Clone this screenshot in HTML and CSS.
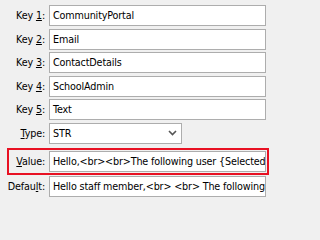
FILE: index.html
```html
<!DOCTYPE html>
<html>
<head>
<meta charset="utf-8">
<link rel="stylesheet" href="styles.css">
</head>
<body>
<div class="form">
  <div class="row">
    <div class="label">Key <u>1</u>:</div>
    <div class="field">CommunityPortal</div>
  </div>
  <div class="row">
    <div class="label">Key <u>2</u>:</div>
    <div class="field">Email</div>
  </div>
  <div class="row">
    <div class="label">Key <u>3</u>:</div>
    <div class="field">ContactDetails</div>
  </div>
  <div class="row">
    <div class="label">Key <u>4</u>:</div>
    <div class="field">SchoolAdmin</div>
  </div>
  <div class="row">
    <div class="label">Key <u>5</u>:</div>
    <div class="field">Text</div>
  </div>
  <div class="row">
    <div class="label"><u>T</u>ype:</div>
    <div class="field select">
      <span>STR</span>
      <svg class="chev" width="9" height="6" viewBox="0 0 9 6"><path d="M1 1 L4.5 4.5 L8 1" fill="none" stroke="#555" stroke-width="1.6"/></svg>
    </div>
  </div>
  <div class="row highlight">
    <div class="label"><u>V</u>alue:</div>
    <div class="field">Hello,&lt;br&gt;&lt;br&gt;The following user {Selected</div>
  </div>
  <div class="row last">
    <div class="label">Defau<u>l</u>t:</div>
    <div class="field">Hello staff member,&lt;br&gt; &lt;br&gt; The following</div>
  </div>
</div>
</body>
</html>
```

FILE: styles.css
```css
html, body {
  margin: 0;
  padding: 0;
  background: #f0f0f0;
}
body {
  font-family: "DejaVu Sans Condensed", "Liberation Sans", sans-serif;
  font-size: 10.7px;
  letter-spacing: -0.15px;
  color: #000;
  width: 271px;
  height: 202px;
  overflow: hidden;
}
.form {
  display: flex;
  flex-direction: column;
  gap: 2.5px;
  padding-top: 5px;
}
.row {
  display: flex;
  align-items: center;
  height: 21px;
  margin-right: 5px;
}
.label {
  width: 49px;
  flex: none;
  box-sizing: border-box;
  padding-right: 4px;
  text-align: right;
  white-space: nowrap;
}
.field {
  flex: 1;
  min-width: 0;
  height: 21px;
  box-sizing: border-box;
  border: 1px solid #adadad;
  background: #fff;
  padding-left: 3px;
  line-height: 19px;
  white-space: nowrap;
  overflow: hidden;
}
.select {
  flex: none;
  width: 133px;
  display: flex;
  align-items: center;
  justify-content: space-between;
  padding-right: 4px;
}
.chev {
  display: block;
}
.highlight {
  height: auto;
  margin-top: 1.5px;
  margin-left: 7px;
  margin-right: 2px;
  border: 2px solid #e81123;
  padding: 1px;
}
.highlight .label {
  width: 39px;
}
.last {
  margin-top: -1px;
}
```
